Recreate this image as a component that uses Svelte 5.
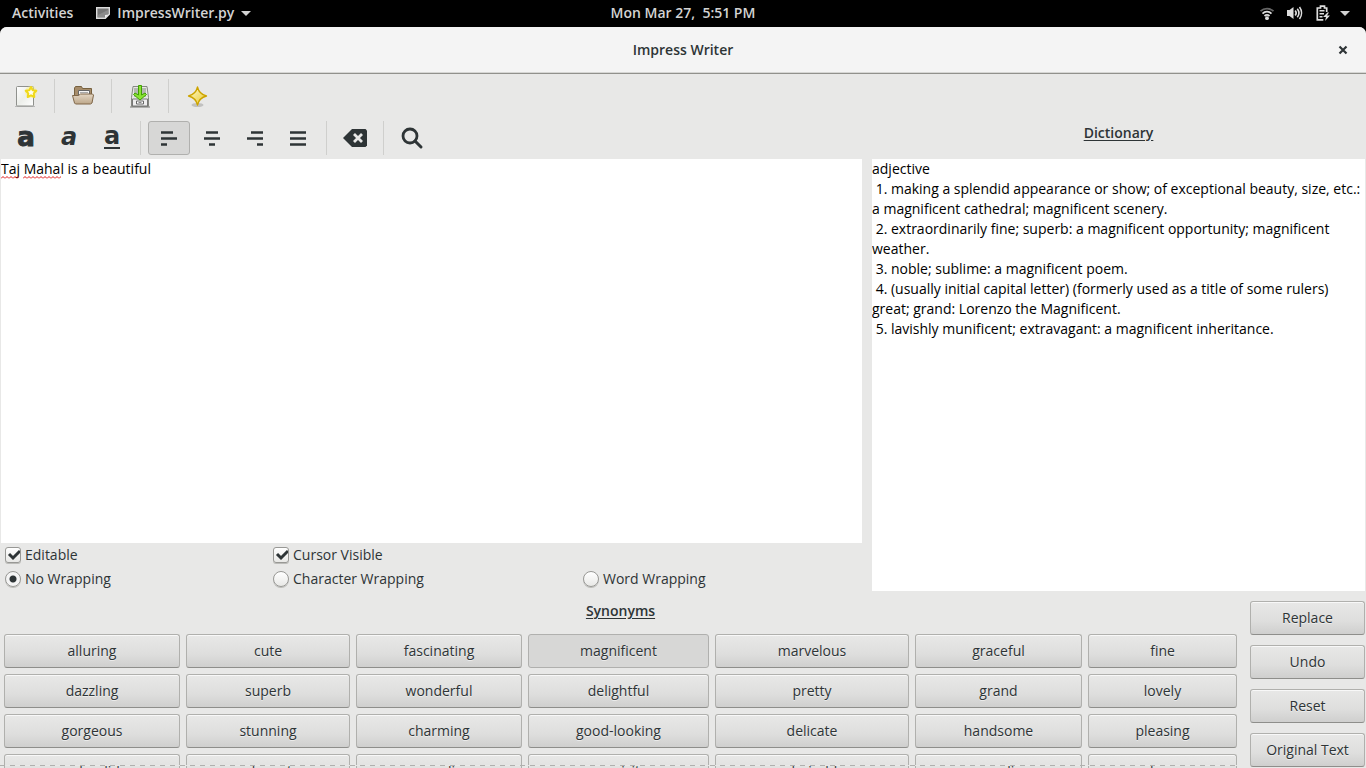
<script>
  const rows = [
    ['alluring', 'cute', 'fascinating', 'magnificent', 'marvelous', 'graceful', 'fine'],
    ['dazzling', 'superb', 'wonderful', 'delightful', 'pretty', 'grand', 'lovely'],
    ['gorgeous', 'stunning', 'charming', 'good-looking', 'delicate', 'handsome', 'pleasing'],
    ['splendid', 'elegant', 'angelic', 'exquisite', 'admirable', 'appealing', 'classy']
  ];
  const actions = ['Replace', 'Undo', 'Reset', 'Original Text'];
  const definition = `adjective
 1. making a splendid appearance or show; of exceptional beauty, size, etc.: a magnificent cathedral; magnificent scenery.
 2. extraordinarily fine; superb: a magnificent opportunity; magnificent weather.
 3. noble; sublime: a magnificent poem.
 4. (usually initial capital letter) (formerly used as a title of some rulers) great; grand: Lorenzo the Magnificent.
 5. lavishly munificent; extravagant: a magnificent inheritance.`;
  let selected = $state('magnificent');
  let text = $state('Taj Mahal is a beautiful');
  let align = $state('left');
  let editable = $state(true);
  let cursorVisible = $state(true);
  let wrapping = $state('none');
  const wrapModes = [
    ['none', 'No Wrapping'],
    ['char', 'Character Wrapping'],
    ['word', 'Word Wrapping']
  ];
  const lines = {
    left: ['M1 2.5h12', 'M1 8.5h16', 'M1 14.5h6'],
    center: ['M3 2.5h12', 'M1 8.5h16', 'M6 14.5h6'],
    right: ['M5 2.5h12', 'M1 8.5h16', 'M11 14.5h6'],
    fill: ['M1 2.5h16', 'M1 8.5h16', 'M1 14.5h16']
  };
</script>

<div class="desktop">
  <header class="topbar">
    <div class="side">
      <button class="activities">Activities</button>
      <button class="appmenu">
        <svg width="14" height="12" viewBox="0 0 14 12"><path d="M.7.700h12.600v6.600l-4 4H.7z" fill="#777" stroke="#ddd" stroke-width="1.400" /><path d="M2 8l10-5v4l-4 3H2z" fill="#8c8c8c" /><path d="M13 7.500l-4 3.500v-3z" fill="#eee" /></svg>
        <span>ImpressWriter.py</span>
        <svg width="10" height="5" viewBox="0 0 10 5"><path d="M0 0h10L5 5z" fill="#d3d3d3" /></svg>
      </button>
    </div>
    <time>Mon Mar 27,&nbsp; 5:51 PM</time>
    <button class="status" aria-label="System status">
      <svg width="16" height="16" viewBox="0 0 16 16" fill="none" stroke-width="1.8"><path d="M1.500 6.200a9.500 9.500 0 0 1 13 0" stroke="#666" /><path d="M3.500 8.600a6.300 6.300 0 0 1 9 0M5.500 11a3.700 3.700 0 0 1 5 0" stroke="#ddd" /><circle cx="8" cy="13.200" r="1.900" fill="#ddd" /></svg>
      <svg width="16" height="16" viewBox="0 0 16 16" fill="none" stroke="#ddd" stroke-width="1.6"><path d="M0 5h2.500L6.500 2v12L2.500 11H0z" fill="#ddd" stroke="none" /><path d="M8.200 5.500a4 4 0 0 1 0 5M10.300 3.700a7 7 0 0 1 0 8.600M12.500 2a10 10 0 0 1 0 12" /></svg>
      <svg width="16" height="16" viewBox="0 0 16 16"><path d="M11.700 7V3H9.500V1.200h-4V3H2.300v11.900h6" fill="none" stroke="#ddd" stroke-width="1.700" /><path d="M4.500 5h5v1.600h-5zM4.500 8h4.500v1.600H4.500zM4.500 11h3v1.600h-3z" fill="#ddd" /><path d="M12.500 7.500l-4.500 4.500h3l-1 4 5-5.500h-3l2-3z" fill="#ddd" /></svg>
      <svg class="caret" width="10" height="5" viewBox="0 0 10 5"><path d="M0 0h10L5 5z" fill="#d3d3d3" /></svg>
    </button>
  </header>

  <div class="window">
    <div class="titlebar">
      <h1>Impress Writer</h1>
      <button class="close" aria-label="Close"><svg width="10" height="10" viewBox="0 0 10 10"><path d="M1.500 1.500l7 7M8.500 1.500l-7 7" stroke="#2e3436" stroke-width="2.200" /></svg></button>
    </div>

    <main>
      <section class="editor">
        <div class="toolbar files" role="toolbar" aria-label="File">
          <button class="tool" aria-label="New">
            <svg width="24" height="24" viewBox="0 0 24 24"><defs><linearGradient id="paper" x2="1" y2="1"><stop stop-color="#fff" /><stop offset=".5" stop-color="#eceeea" /><stop offset="1" stop-color="#fff" /></linearGradient></defs><path d="M1 22.500h20" stroke="#999" opacity=".6" /><rect x="2.500" y="2.500" width="17" height="19.500" rx="1" fill="url(#paper)" stroke="#8f918d" /><circle cx="17" cy="8" r="6" fill="#fff27a" opacity=".45" /><path d="M17 3l1.700 3.200 3.600.6-2.600 2.600.6 3.600-3.300-1.700-3.300 1.700.6-3.600-2.600-2.600 3.600-.6z" fill="#fffef0" stroke="#f0d91c" stroke-width="2" stroke-linejoin="round" /></svg>
          </button>
          <span class="sep"></span>
          <button class="tool" aria-label="Open">
            <svg width="24" height="24" viewBox="0 0 24 24"><defs><linearGradient id="folder" x2="0" y2="1"><stop stop-color="#e4d7c5" /><stop offset="1" stop-color="#bda78a" /></linearGradient></defs><path d="M3.500 14V4l1-1.500h6l1 2H20.500V14z" fill="#a68c6a" stroke="#77613f" /><path d="M7.500 6.500h11V14h-11z" fill="#f4f4f4" stroke="#666" /><path d="M9 8.500h8" stroke="#aaa" /><path d="M1.500 11.500h6l2-1.500h12l1 1-1.500 8-1.500 1h-15l-1-1z" fill="url(#folder)" stroke="#806749" /></svg>
          </button>
          <span class="sep"></span>
          <button class="tool" aria-label="Save">
            <svg width="24" height="24" viewBox="0 0 24 24"><path d="M2 23h20" stroke="#777" stroke-width="2" opacity=".5" /><path d="M5 2.500h14l1.500 11v9h-17v-9z" fill="#e8e8e5" stroke="#858781" /><path d="M6 4h12v9H6z" fill="#b4b8b0" /><path d="M4.500 15h15v7h-15z" fill="#eee" stroke="#777" /><path d="M8.500 17h7v3h-7z" fill="#fff" stroke="#666" /><path d="M10.500 18.500h3" stroke="#888" /><path d="M10.500 1.500h3v9.500l3.500-2 1.500 1.500-6.500 5.500-6.500-5.500L7 9l3.500 2z" fill="#8ae234" stroke="#3fa000" stroke-linejoin="round" /></svg>
          </button>
          <span class="sep"></span>
          <button class="tool" aria-label="Suggest">
            <svg width="24" height="24" viewBox="0 0 24 24"><defs><linearGradient id="star" x2="1" y2="1"><stop stop-color="#fffbd0" /><stop offset="1" stop-color="#e8c92c" /></linearGradient></defs><ellipse cx="12.500" cy="21" rx="6" ry="2" fill="#888" opacity=".4" /><path d="M12.500 3c1 4.500 3 7.500 9 9-6 1.500-8 4.500-9 9-1-4.500-3-7.500-9-9 6-1.500 8-4.500 9-9z" fill="url(#star)" stroke="#cda400" stroke-width="1.300" stroke-linejoin="round" /></svg>
          </button>
        </div>

        <div class="toolbar format" role="toolbar" aria-label="Format">
          <button class="tool letter bold" aria-label="Bold">a</button>
          <button class="tool letter italic" aria-label="Italic">a</button>
          <button class="tool letter under" aria-label="Underline"><span>a</span></button>
          <span class="sep"></span>
          {#each Object.entries(lines) as [name, paths]}
            <button class="tool" class:active={align === name} aria-label="Align {name}" aria-pressed={align === name} onclick={() => (align = name)}>
              <svg width="18" height="17" viewBox="0 0 18 17">{#each paths as d}<path {d} stroke="#2e3436" stroke-width="2.600" />{/each}</svg>
            </button>
          {/each}
          <span class="sep"></span>
          <button class="tool" aria-label="Clear"><svg width="24" height="18" viewBox="0 0 24 18"><path d="M0 9l9-9h13.500L24 1.500v15L22.500 18H9z" fill="#2e3436" /><path d="M11 5l8 8M19 5l-8 8" stroke="#e8e8e7" stroke-width="2.800" /></svg></button>
          <span class="sep"></span>
          <button class="tool" aria-label="Find"><svg width="24" height="24" viewBox="0 0 24 24"><circle cx="10" cy="10" r="7" fill="none" stroke="#2e3436" stroke-width="2.800" /><path d="M15 15l6 6" stroke="#2e3436" stroke-width="3" stroke-linecap="round" /></svg></button>
        </div>

        <div class="sheet">
          <textarea aria-label="Document" spellcheck="false" bind:value={text} readonly={!editable} style:text-align={align === 'fill' ? 'justify' : align}></textarea>
          <span class="squiggle first"></span>
          <span class="squiggle second"></span>
        </div>

        <div class="options">
          <label><input type="checkbox" bind:checked={editable} />Editable</label>
          <label><input type="checkbox" bind:checked={cursorVisible} />Cursor Visible</label>
          <span></span>
          {#each wrapModes as [value, label]}
            <label><input type="radio" name="wrap" {value} bind:group={wrapping} />{label}</label>
          {/each}
        </div>
      </section>

      <section class="dictionary">
        <h2 id="dict">Dictionary</h2>
        <textarea aria-labelledby="dict" readonly spellcheck="false" value={definition}></textarea>
      </section>
    </main>

    <footer>
      <section class="synonyms">
        <h2>Synonyms</h2>
        <div class="words">
          {#each rows as row}
            {#each row as word}
              <button class="push" class:pressed={selected === word} onclick={() => (selected = word)}>{word}</button>
            {/each}
          {/each}
        </div>
      </section>
      <div class="actions">
        {#each actions as action}<button class="push">{action}</button>{/each}
      </div>
    </footer>
  </div>
</div>

<style>
  :global(body) { margin: 0; overflow: hidden; background: #000; }
  .desktop {
    display: flex; flex-direction: column; height: 100vh; overflow: hidden;
    background: #000; color: #2e3436; font: 14px/20px "Open Sans", "Noto Sans", sans-serif;
  }
  button, textarea { font: inherit; color: inherit; box-sizing: border-box; }
  button { border: 0; padding: 0; background: none; }
  svg { display: block; flex: none; }
  .topbar {
    display: grid; grid-template-columns: 1fr auto 1fr; align-items: center; flex: none;
    box-sizing: border-box; height: 27px; padding: 0 12px 1px; color: #d3d3d3; font-weight: 600;
  }
  .side, .appmenu, .status { display: flex; align-items: center; }
  .side { gap: 23px; }
  .appmenu { gap: 7px; }
  .status { justify-self: end; gap: 12px; padding-right: 4px; }
  .caret { margin-left: -3px; }
  .window { flex: 1; min-height: 0; display: flex; flex-direction: column; background: #e8e8e7; border-radius: 7px 7px 0 0; overflow: hidden; }
  .titlebar {
    position: relative; flex: none; display: flex; align-items: center; justify-content: center;
    height: 47px; box-sizing: border-box; background: #f4f4f4; border-bottom: 1px solid #91918c; box-shadow: inset 0 -1px #d6d6d4;
  }
  h1, h2 { margin: 0; font-size: 14px; line-height: 20px; font-weight: 600; }
  h2 { text-align: center; text-decoration: underline; text-underline-offset: 2px; }
  .close { position: absolute; right: 18px; }
  main { flex: none; display: grid; grid-template-columns: minmax(0, 862fr) minmax(0, 494fr); gap: 10px; height: 517px; }
  .editor, .dictionary { display: flex; flex-direction: column; min-height: 0; }
  .toolbar { display: flex; align-items: center; flex: none; padding-left: 5px; }
  .files { height: 43px; }
  .format { height: 42px; gap: 1px; }
  .tool { width: 42px; height: 34px; display: grid; place-items: center; border: 1px solid transparent; border-radius: 3px; flex: none; }
  .tool.active { background: #d7d7d6; border-color: #b0b0ae; }
  .sep { width: 1px; height: 34px; margin: 0 7px; background: #cfcfcd; flex: none; }
  .format .sep { margin: 0 6px; }
  .letter { font: 700 26px/26px "DejaVu Sans", sans-serif; padding-bottom: 2px; }
  .bold { -webkit-text-stroke: 1px #2e3436; }
  .italic { font-style: oblique; font-size: 24px; }
  .under span { display: block; height: 22px; line-height: 22px; font-size: 24px; border-bottom: 2px solid #2e3436; }
  .sheet { position: relative; flex: 1; min-height: 0; padding-left: 1px; }
  textarea { display: block; width: 100%; height: 100%; border: 0; padding: 0; resize: none; outline: none; background: #fff; color: #000; overflow: hidden; }
  .squiggle {
    position: absolute; top: 17px; height: 3px;
    background: url("data:image/svg+xml,%3Csvg xmlns='http://www.w3.org/2000/svg' width='4' height='3'%3E%3Cpath d='M0 2.500L2 .5 4 2.500' fill='none' stroke='%23d11'/%3E%3C/svg%3E") repeat-x;
  }
  .first { left: 1px; width: 18px; }
  .second { left: 23px; width: 38px; }
  .options { flex: none; display: grid; grid-template-columns: 268fr 310fr 279fr; grid-auto-rows: 24px; padding-left: 5px; }
  .options label { display: flex; align-items: center; gap: 4px; }
  input { appearance: none; box-sizing: border-box; width: 16px; height: 16px; margin: 0; border: 1px solid #989895; border-radius: 3px; background: linear-gradient(#fff, #e8e8e6); box-shadow: 0 1px #bcbcb9; }
  input[type='radio'] { border-radius: 50%; }
  input[type='radio']:checked { background: radial-gradient(circle, #2e3436 3px, #f4f4f4 4px); }
  input[type='checkbox']:checked { background: url("data:image/svg+xml,%3Csvg xmlns='http://www.w3.org/2000/svg' width='14' height='14'%3E%3Cpath d='M3 6l4 4 7-7' fill='none' stroke='%232e3436' stroke-width='3'/%3E%3C/svg%3E") no-repeat, linear-gradient(#fff, #e8e8e6); }
  .dictionary { padding-right: 1px; }
  .dictionary h2 { flex: none; padding: 49px 0 16px; }
  .dictionary textarea { flex: 1; }
  footer { flex: 1; min-height: 0; display: flex; gap: 13px; padding: 10px 1px 0 4px; overflow: hidden; }
  .synonyms { position: relative; flex: 1; min-width: 0; }
  .synonyms::after { content: ''; position: absolute; left: -4px; right: -2px; bottom: 2px; height: 1px; background: repeating-linear-gradient(90deg, #b0b0ae 0 5px, #e8e8e7 5px 10px); }
  .synonyms h2 { margin-bottom: 13px; }
  .words { display: grid; grid-template-columns: 176fr 164fr 166fr 181fr 194fr 167fr 149fr; gap: 6px; }
  .actions { width: 115px; flex: none; display: flex; flex-direction: column; gap: 10px; }
  .push {
    height: 34px; flex: none; min-width: 0; border: 1px solid #b0b0ad; border-bottom-color: #8e8e8b; border-radius: 3px;
    background: linear-gradient(#e8e8e7, #dededd 60%, #cfcfce); box-shadow: inset 0 1px #f8f8f8; text-shadow: 0 1px #fff8;
  }
  .push.pressed { background: #d7d7d6; border-color: #b0b0ae; box-shadow: none; }
</style>
